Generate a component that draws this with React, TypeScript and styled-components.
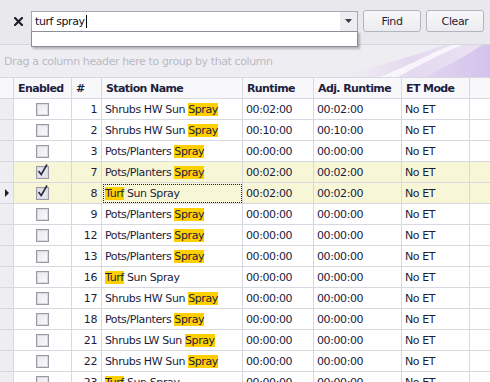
import styled, { createGlobalStyle } from "styled-components";

const GlobalStyle = createGlobalStyle`
  html, body { margin: 0; padding: 0; }
  body {
    width: 490px;
    height: 382px;
    overflow: hidden;
    background: #ffffff;
    font-family: "DejaVu Sans", "Liberation Sans", sans-serif;
    font-size: 11px;
    letter-spacing: -0.4px;
    color: #1c1c3a;
  }
`

type Row = {
  enabled: boolean
  num: number
  name: string
  runtime: string
  adj: string
  mode: string
}

const rows: Row[] = [
  { enabled: false, num: 1, name: "Shrubs HW Sun Spray", runtime: "00:02:00", adj: "00:02:00", mode: "No ET" },
  { enabled: false, num: 2, name: "Shrubs HW Sun Spray", runtime: "00:10:00", adj: "00:10:00", mode: "No ET" },
  { enabled: false, num: 3, name: "Pots/Planters Spray", runtime: "00:00:00", adj: "00:00:00", mode: "No ET" },
  { enabled: true, num: 7, name: "Pots/Planters Spray", runtime: "00:02:00", adj: "00:02:00", mode: "No ET" },
  { enabled: true, num: 8, name: "Turf Sun Spray", runtime: "00:02:00", adj: "00:02:00", mode: "No ET" },
  { enabled: false, num: 9, name: "Pots/Planters Spray", runtime: "00:00:00", adj: "00:00:00", mode: "No ET" },
  { enabled: false, num: 12, name: "Pots/Planters Spray", runtime: "00:00:00", adj: "00:00:00", mode: "No ET" },
  { enabled: false, num: 13, name: "Pots/Planters Spray", runtime: "00:00:00", adj: "00:00:00", mode: "No ET" },
  { enabled: false, num: 16, name: "Turf Sun Spray", runtime: "00:00:00", adj: "00:00:00", mode: "No ET" },
  { enabled: false, num: 17, name: "Shrubs HW Sun Spray", runtime: "00:00:00", adj: "00:00:00", mode: "No ET" },
  { enabled: false, num: 18, name: "Pots/Planters Spray", runtime: "00:00:00", adj: "00:00:00", mode: "No ET" },
  { enabled: false, num: 21, name: "Shrubs LW Sun Spray", runtime: "00:00:00", adj: "00:00:00", mode: "No ET" },
  { enabled: false, num: 22, name: "Shrubs HW Sun Spray", runtime: "00:00:00", adj: "00:00:00", mode: "No ET" },
  { enabled: false, num: 23, name: "Turf Sun Spray", runtime: "00:00:00", adj: "00:00:00", mode: "No ET" },
]

const COLS = "14px 58px 30px 141px 71px 88px 68px 1fr"

// the grid only marks the first word it finds: "Turf" if there, else "Spray"
function highlight(text: string) {
  const word = text.startsWith("Turf") ? "Turf" : "Spray"
  const at = text.indexOf(word)
  return (
    <span>
      {text.slice(0, at)}
      <Mark>{word}</Mark>
      {text.slice(at + word.length)}
    </span>
  )
}

export default function App() {
  return (
    <>
      <GlobalStyle />
      <Page>
        <Toolbar>
          <CloseX>
            <svg width="9" height="9" viewBox="0 0 9 9">
              <path d="M1 1L8 8M8 1L1 8" stroke="#20202c" strokeWidth="2.2" strokeLinecap="square" />
            </svg>
          </CloseX>
          <SearchWrap>
            <Search>
              <SearchText>turf spray<Caret /></SearchText>
              <DropButton>
                <svg width="7" height="4" viewBox="0 0 7 4">
                  <path d="M0 0h7L3.5 4z" fill="#3a3a4a" />
                </svg>
              </DropButton>
            </Search>
            <Popup />
          </SearchWrap>
          <Button>Find</Button>
          <Button>Clear</Button>
        </Toolbar>

        <GroupPanel>
          <GroupText>Drag a column header here to group by that column</GroupText>
          <Swoosh viewBox="0 0 170 32" preserveAspectRatio="none">
            <defs>
              <linearGradient id="sw1" x1="0" y1="0" x2="1" y2="0">
                <stop offset="0" stopColor="#eee8f4" stopOpacity="0" />
                <stop offset="0.5" stopColor="#e4d8ef" />
                <stop offset="1" stopColor="#ebe4f3" />
              </linearGradient>
              <linearGradient id="sw2" x1="0" y1="0" x2="1" y2="0">
                <stop offset="0" stopColor="#cdb9e8" stopOpacity="0.3" />
                <stop offset="1" stopColor="#cbb6ea" />
              </linearGradient>
            </defs>
            <path d="M10 32 C60 22 100 8 125 0 L170 0 L170 32 Z" fill="url(#sw1)" />
            <path d="M105 32 C130 20 150 8 162 0 L170 0 L170 32 Z" fill="url(#sw2)" opacity="0.75" />
            <path d="M60 32 C95 18 115 6 132 0 L142 0 C122 8 100 20 78 32 Z" fill="#ffffff" opacity="0.7" />
          </Swoosh>
        </GroupPanel>

        <Grid>
          <HeaderRow>
            <HeadCell />
            <HeadCell>Enabled</HeadCell>
            <HeadCell>#</HeadCell>
            <HeadCell>Station Name</HeadCell>
            <HeadCell>Runtime</HeadCell>
            <HeadCell>Adj. Runtime</HeadCell>
            <HeadCell>ET Mode</HeadCell>
            <HeadCell $last />
          </HeaderRow>
          {rows.map((r) => (
            <DataRow key={r.num} $selected={r.enabled}>
              <Indicator>{r.num === 8 ? <Arrow /> : null}</Indicator>
              <Cell $center>
                <Check $on={r.enabled}>
                  {r.enabled && (
                    <svg width="13" height="14" viewBox="0 0 13 14">
                      <path d="M2.5 8 L5.2 11.5 L11 1.5" stroke="#2a2a40" strokeWidth="1.6" fill="none" />
                    </svg>
                  )}
                </Check>
              </Cell>
              <Cell $right>{r.num}</Cell>
              <Cell $focused={r.num === 8}>{highlight(r.name)}</Cell>
              <Cell>{r.runtime}</Cell>
              <Cell>{r.adj}</Cell>
              <Cell>{r.mode}</Cell>
              <Filler />
            </DataRow>
          ))}
        </Grid>
      </Page>
    </>
  )
}

const Page = styled.div`
  width: 490px;
  height: 382px;
  overflow: hidden;
  display: flex;
  flex-direction: column;
`

const Toolbar = styled.div`
  height: 45px;
  flex-shrink: 0;
  background: #e9e9ed;
  border-bottom: 1px solid #d6d6de;
  display: flex;
  align-items: center;
  padding: 0 6px 2px 11px;
  box-sizing: border-box;
  gap: 5px;
  position: relative;
  z-index: 2;
`

const CloseX = styled.div`
  width: 15px;
  display: flex;
  align-items: center;
  justify-content: center;
`

const SearchWrap = styled.div`
  position: relative;
  width: 327px;
  height: 21px;
`

const Search = styled.div`
  height: 21px;
  box-sizing: border-box;
  border: 1px solid #a7a7b3;
  background: #ffffff;
  display: flex;
  align-items: center;
`

const SearchText = styled.div`
  flex: 1;
  padding-left: 3px;
  color: #101020;
  display: flex;
  align-items: center;
`

const Caret = styled.span`
  display: inline-block;
  width: 1px;
  height: 13px;
  background: #000;
  margin-left: 1px;
`

const DropButton = styled.div`
  width: 17px;
  height: 19px;
  display: flex;
  align-items: center;
  justify-content: center;
  background: #eeeef2;
`

const Popup = styled.div`
  position: absolute;
  left: 0;
  top: 20px;
  width: 327px;
  height: 16px;
  box-sizing: border-box;
  background: #ffffff;
  border: 1px solid #8e8e9a;
  box-shadow: 2px 2px 2px rgba(0, 0, 0, 0.25);
`

const Button = styled.div`
  width: 58px;
  height: 22px;
  box-sizing: border-box;
  border: 1px solid #b4b4be;
  border-radius: 3px;
  background: linear-gradient(#f8f8fa, #ececf0);
  display: flex;
  align-items: center;
  justify-content: center;
  color: #1c1c3a;
`

const GroupPanel = styled.div`
  height: 32px;
  flex-shrink: 0;
  background: #eeeef2;
  position: relative;
  display: flex;
  align-items: center;
  padding-left: 4px;
  overflow: hidden;
`

const GroupText = styled.div`
  color: #b9b9c4;
  position: relative;
  z-index: 1;
`

const Swoosh = styled.svg`
  position: absolute;
  right: 0;
  top: 0;
  width: 170px;
  height: 32px;
`

const Grid = styled.div`
  display: flex;
  flex-direction: column;
  border-top: 1px solid #d8d8e0;
`

const HeaderRow = styled.div`
  display: grid;
  grid-template-columns: ${COLS};
  height: 21px;
  background: #f8f8fa;
`

const HeadCell = styled.div<{ $last?: boolean }>`
  border-right: ${(p) => (p.$last ? "none" : "1px solid #d8d8e0")};
  border-bottom: 1px solid #d8d8e0;
  font-weight: bold;
  letter-spacing: -0.6px;
  color: #1e1e40;
  padding-left: 4px;
  display: flex;
  align-items: center;
  white-space: nowrap;
  overflow: hidden;
`

const DataRow = styled.div<{ $selected?: boolean }>`
  display: grid;
  grid-template-columns: ${COLS};
  height: 21px;
  background: ${(p) => (p.$selected ? "#f7f7d8" : "#ffffff")};
`

const Indicator = styled.div`
  background: #eeeef2;
  border-right: 1px solid #d8d8e0;
  border-bottom: 1px solid #d8d8e0;
  display: flex;
  align-items: center;
  justify-content: center;
`

const Arrow = styled.div`
  width: 0;
  height: 0;
  border-top: 4px solid transparent;
  border-bottom: 4px solid transparent;
  border-left: 4px solid #1c1c30;
  margin-left: 1px;
`

const Cell = styled.div<{ $center?: boolean; $right?: boolean; $focused?: boolean }>`
  position: relative;
  border-right: 1px solid #d8d8e0;
  border-bottom: 1px solid #d8d8e0;
  display: flex;
  align-items: center;
  justify-content: ${(p) => (p.$center ? "center" : p.$right ? "flex-end" : "flex-start")};
  padding: 0 ${(p) => (p.$right ? "4px" : "0")} 0 ${(p) => (p.$right || p.$center ? "0" : "3px")};
  white-space: pre;
  overflow: hidden;
  outline: ${(p) => (p.$focused ? "1px dotted #222" : "none")};
  outline-offset: -2px;
`

const Filler = styled.div`
  border-bottom: 1px solid #d8d8e0;
`

const Mark = styled.span`
  background: #ffd000;
`

const Check = styled.div<{ $on?: boolean }>`
  width: 13px;
  height: 13px;
  box-sizing: border-box;
  border: 1px solid #9a9aa6;
  background: ${(p) => (p.$on ? "#e4e4ea" : "linear-gradient(135deg, #e8e8ee, #fbfbfd)")};
  box-shadow: inset 0 0 0 1px #d8d8e0;
  position: relative;
  svg {
    position: absolute;
    left: -1px;
    top: -4px;
  }
`
